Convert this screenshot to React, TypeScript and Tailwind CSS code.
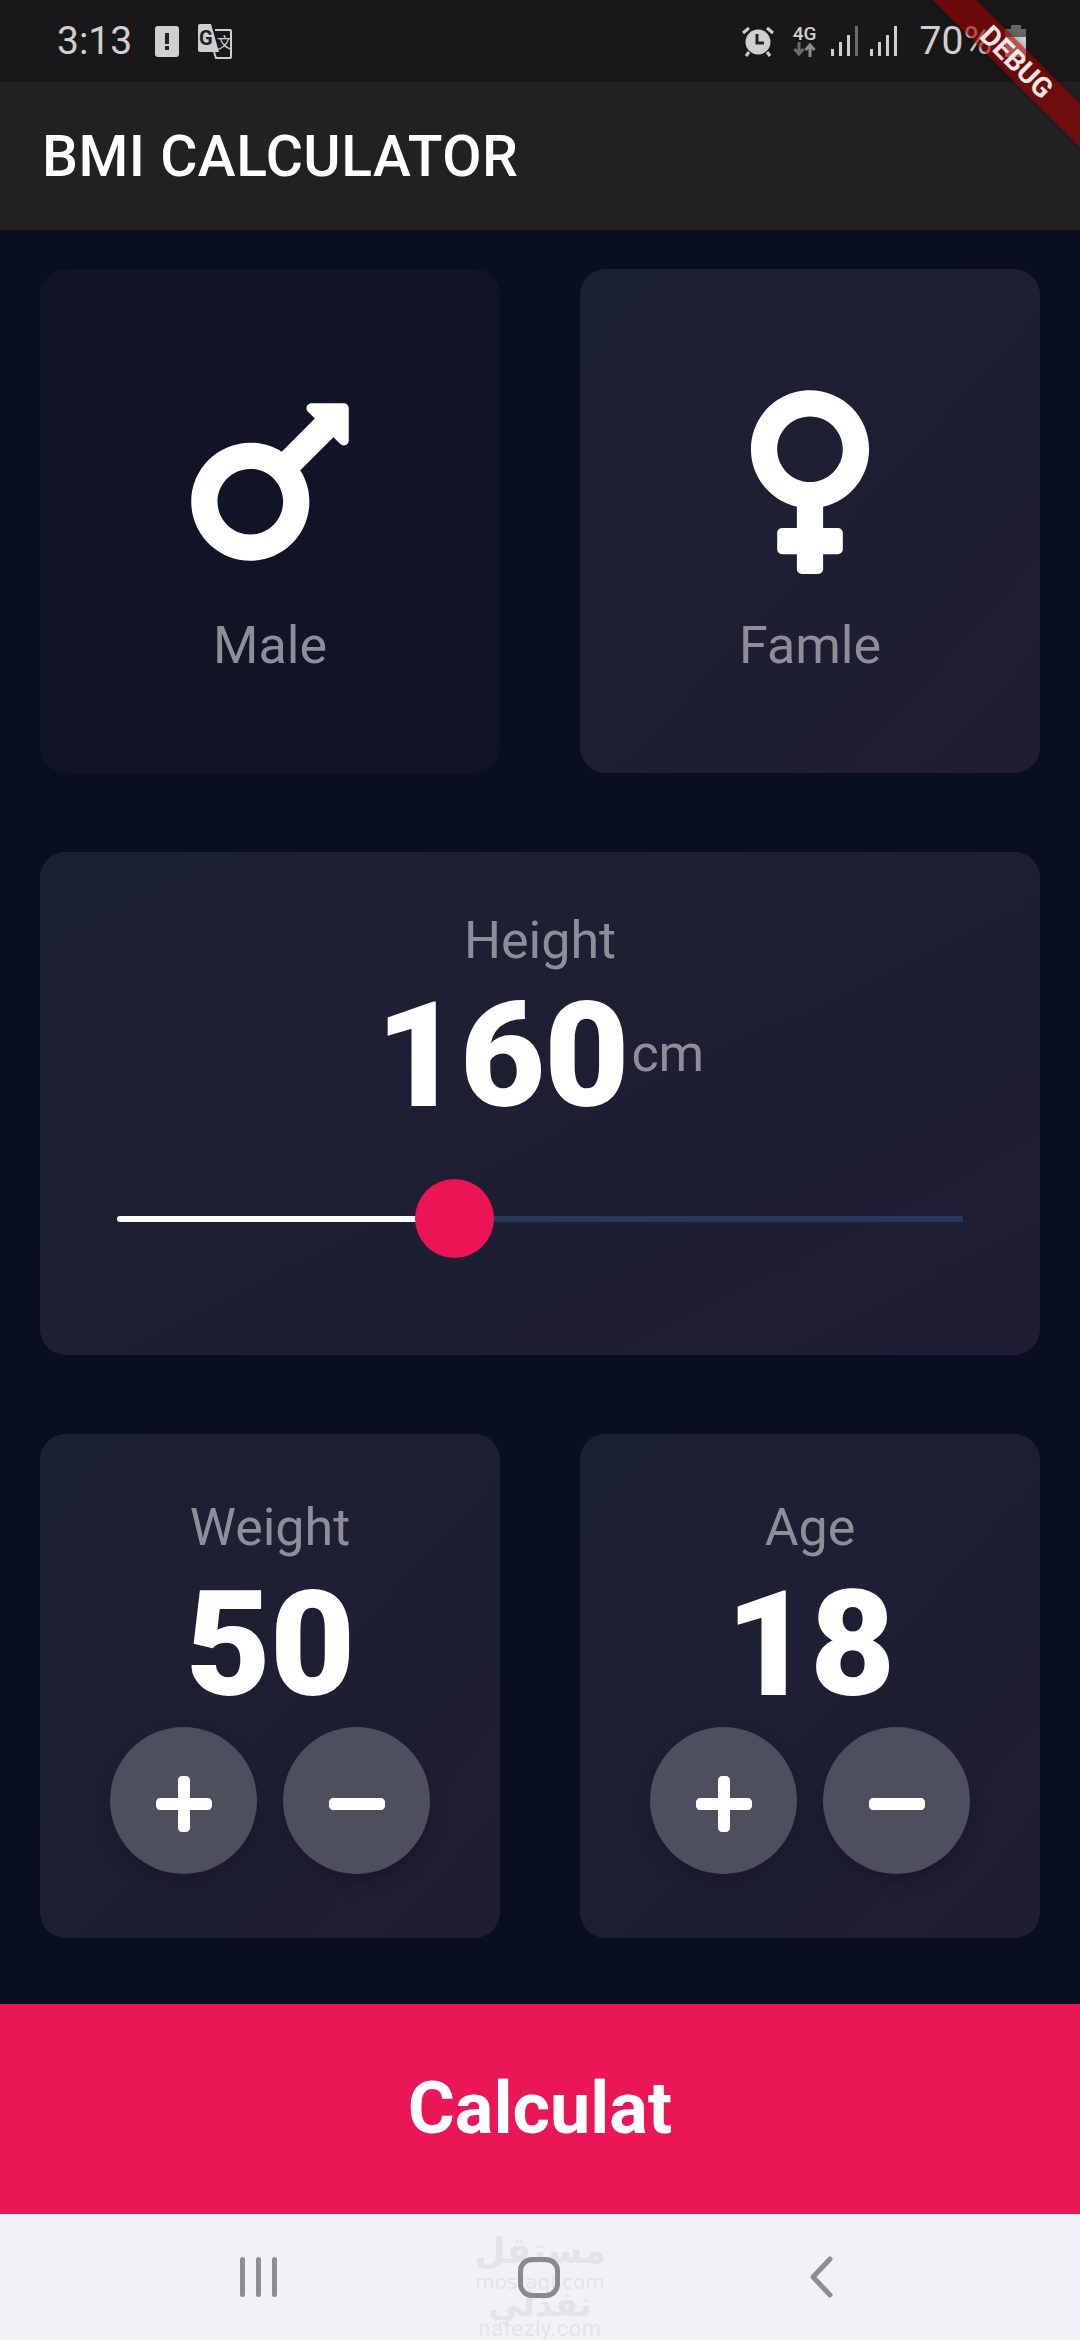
import { FaMars, FaVenus, FaPlus, FaMinus } from "react-icons/fa";

const cardClass = "rounded-[26px] bg-linear-to-br from-[#1c2033] to-[#1f1d33]";

const StatusBar = () => {
  return (
    <div className="h-[82px] flex items-center bg-[#181818] text-[#cfcfcf] pl-[57px] pr-[54px]">
      <span className="text-[39px] leading-none">3:13</span>
      <div className="ml-[23px] w-[24px] h-[31px] rounded-[3px] bg-[#cfcfcf] flex items-center justify-center">
        <div className="flex flex-col items-center gap-[2px]">
          <div className="w-[4px] h-[11px] bg-[#222]" />
          <div className="w-[4px] h-[4px] bg-[#222]" />
        </div>
      </div>
      <svg className="ml-[19px]" width="34" height="35" viewBox="0 0 34 35">
        <path d="M2 0h11l8 28H2a2 2 0 0 1-2-2V2a2 2 0 0 1 2-2z" fill="#cfcfcf" />
        <path d="M17 6h15a1 1 0 0 1 1 1v26a1 1 0 0 1-1 1H18l-2-6" fill="none" stroke="#cfcfcf" strokeWidth="2" />
        <text x="1" y="21" fontSize="20" fontWeight="700" fill="#222" fontFamily="Roboto, sans-serif">G</text>
        <text x="19" y="24" fontSize="15" fill="#cfcfcf" fontFamily="'Noto Sans CJK SC', sans-serif">文</text>
      </svg>
      <div className="flex-1" />
      <svg width="32" height="31" viewBox="0 0 32 31">
        <circle cx="16" cy="16" r="12.5" fill="#cfcfcf" />
        <path d="M15 8v9h7" fill="none" stroke="#222" strokeWidth="3" />
        <path d="M1 7l6-5M31 7l-6-5M7 26l-3 4M25 26l3 4" stroke="#cfcfcf" strokeWidth="3" />
      </svg>
      <div className="ml-[19px] w-[24px] flex flex-col items-center">
        <span className="text-[19px] leading-[16px] font-medium">4G</span>
        <svg width="23" height="15" viewBox="0 0 23 15">
          <path d="M6 0v11M1.5 7l4.5 5 4.500-5" fill="none" stroke="#6b6b6b" strokeWidth="3" />
          <path d="M17 15V4M12.500 8L17 3l4.500 5" fill="none" stroke="#8c8c8c" strokeWidth="3" />
        </svg>
      </div>
      <svg className="ml-[14px]" width="27" height="30" viewBox="0 0 27 30">
        <path d="M1.500 23v7M9.500 16v14M17.500 9v21" stroke="#cfcfcf" strokeWidth="3" />
        <path d="M25.500 0v30" stroke="#6b6b6b" strokeWidth="3" />
      </svg>
      <svg className="ml-[12px]" width="27" height="30" viewBox="0 0 27 30">
        <path d="M1.500 23v7M9.500 16v14M17.500 9v21M25.500 0v30" stroke="#cfcfcf" strokeWidth="3" />
      </svg>
      <span className="ml-[23px] text-[39px] leading-none">70%</span>
      <div className="ml-[13px] w-[21px] h-[32px] flex flex-col items-center">
        <div className="w-[10px] h-[4px] bg-[#666]" />
        <div className="w-[21px] h-[8px] bg-[#666]" />
        <div className="w-[21px] h-[20px] bg-[#cfcfcf]" />
      </div>
    </div>
  );
};

const GenderCard = ({ label, active, icon }: { label: string; active?: boolean; icon: React.ReactNode }) => {
  return (
    <div className={`h-[504px] flex flex-col items-center pt-[108px] ${active ? cardClass : "rounded-[26px] bg-[#111326]"}`}>
      {icon}
      <span className="mt-[28px] text-[52px] leading-[61px] text-[#8d8e98]">{label}</span>
    </div>
  );
};

const RoundButton = ({ children }: { children: React.ReactNode }) => {
  return (
    <div className="w-[147px] h-[147px] rounded-full bg-[#4d4e5e] shadow-[0_8px_16px_rgba(0,0,0,0.2)] flex items-center justify-center">
      <div className="mt-[6px] text-white flex">{children}</div>
    </div>
  );
};

const CounterCard = ({ label, value }: { label: string; value: string }) => {
  return (
    <div className={`h-[504px] flex flex-col items-center pt-[63px] ${cardClass}`}>
      <span className="text-[52px] leading-[61px] text-[#8d8e98]">{label}</span>
      <span className="mt-[1px] text-[147px] leading-[172px] font-black text-white -tracking-[1px]">{value}</span>
      <div className="mt-[-4px] flex gap-[26px]">
        <RoundButton><FaPlus size={64} /></RoundButton>
        <RoundButton><FaMinus size={64} /></RoundButton>
      </div>
    </div>
  );
};

export default function App() {
  return (
    <div className="relative w-[1080px] h-[2340px] overflow-hidden flex flex-col bg-[#0a0e21] font-[Roboto,sans-serif]">
      <StatusBar />
      <div className="h-[148px] flex items-center pl-[42px] bg-[#212121]">
        <h1 className="text-[57px] leading-none font-medium text-white tracking-[0.5px]">BMI CALCULATOR</h1>
      </div>

      <div className="flex-1 px-[40px] pt-[39px] flex flex-col gap-[79px]">
        <div className="grid grid-cols-2 gap-[80px]">
          <GenderCard label="Male" icon={<FaMars size={210} className="text-white" />} />
          <GenderCard label="Famle" active icon={<FaVenus size={210} className="text-white" />} />
        </div>

        <div className={`h-[503px] flex flex-col items-center pt-[58px] ${cardClass}`}>
          <span className="text-[52px] leading-[61px] text-[#8d8e98]">Height</span>
          <div className="mt-[-1px] flex items-center">
            <span className="text-[147px] leading-[172px] font-black text-white -tracking-[1px]">160</span>
            <span className="ml-[3px] mb-[5px] text-[52px] leading-[61px] text-[#8d8e98]">cm</span>
          </div>
          <div className="relative mt-[37px] w-[846px] h-[79px] flex items-center">
            <div className="w-[337px] h-[6px] rounded-l-full bg-white" />
            <div className="flex-1 h-[6px] bg-[#233a5e]" />
            <div className="absolute left-[298px] top-0 w-[79px] h-[79px] rounded-full bg-[#eb1555]" />
          </div>
        </div>

        <div className="grid grid-cols-2 gap-[80px]">
          <CounterCard label="Weight" value="50" />
          <CounterCard label="Age" value="18" />
        </div>
      </div>

      <div className="h-[210px] flex items-center justify-center bg-[#ea1656]">
        <span className="text-[72px] leading-none font-bold text-white">Calculat</span>
      </div>

      <div className="relative h-[126px] flex items-center bg-[#f2f2f6] pl-[240px]">
        <div className="w-[37px] h-[40px] flex justify-between">
          <div className="w-[5px] rounded-full bg-[#8e8e8e]" />
          <div className="w-[5px] rounded-full bg-[#8e8e8e]" />
          <div className="w-[5px] rounded-full bg-[#8e8e8e]" />
        </div>
        <div className="relative z-10 ml-[241px] w-[42px] h-[41px] rounded-[14px] border-[5px] border-[#8a8a8a]" />
        <svg className="ml-[249px]" width="24" height="42" viewBox="0 0 24 42">
          <path d="M21 3L4 21l17 18" fill="none" stroke="#8e8e8e" strokeWidth="5" strokeLinecap="round" strokeLinejoin="round" />
        </svg>
        <div className="absolute left-[465px] top-[14px] w-[150px] flex flex-col items-center text-[#e4e4e8]">
          <span className="text-[36px] leading-[46px] font-['DejaVu_Sans',sans-serif] font-bold">مستقل</span>
          <span className="text-[20px] leading-[16px] font-['DejaVu_Sans',sans-serif]">mostaql.com</span>
          <span className="text-[34px] leading-[28px] font-['DejaVu_Sans',sans-serif] font-bold">نفذلي</span>
          <span className="text-[22px] leading-[22px] tracking-[0.5px]">nafezly.com</span>
        </div>
      </div>

      <div className="absolute left-[863px] top-[43px] w-[300px] h-[31px] rotate-45 flex items-center justify-center bg-[#a00000]/60 shadow-[0_0_6px_rgba(0,0,0,0.3)]">
        <span className="pl-[10px] text-[28px] leading-none font-bold text-white/90">DEBUG</span>
      </div>
    </div>
  );
}
